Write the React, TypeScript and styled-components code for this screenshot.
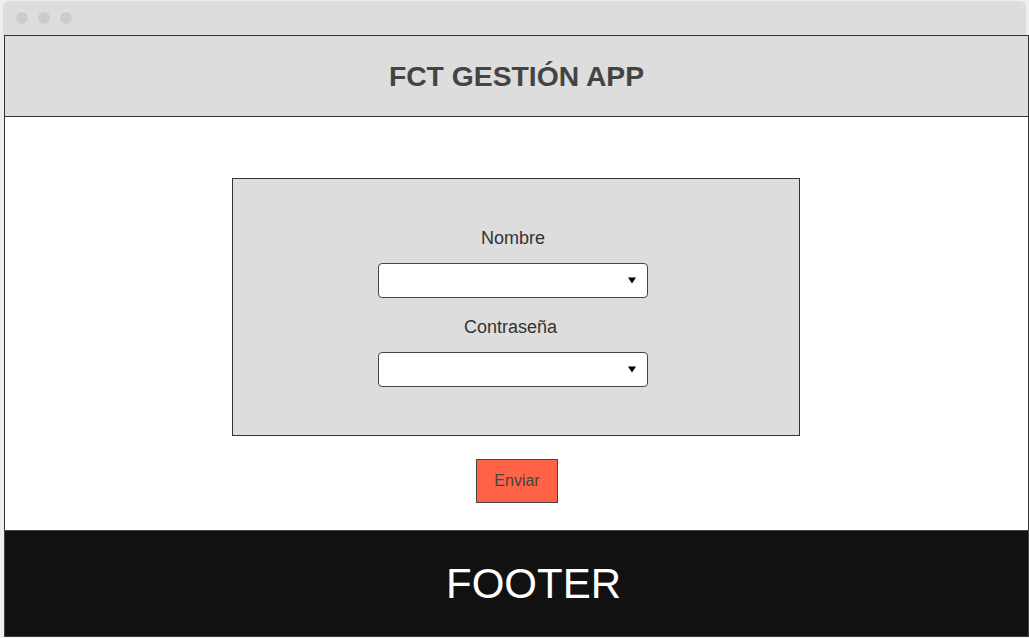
import React from "react";
import styled, { createGlobalStyle } from "styled-components";

const Global = createGlobalStyle`
  html, body { margin: 0; padding: 0; background: #fff; }
  body { font-family: "Liberation Sans", Arial, sans-serif; }
  * { box-sizing: border-box; }
`;

const Window = styled.div`
  width: 1029px;
  height: 638px;
  background: #eeeeee;
  padding-top: 1px;
  display: flex;
  flex-direction: column;
  overflow: hidden;
`;

const Chrome = styled.div`
  margin-left: 3px;
  width: 1023px;
  height: 34px;
  flex: none;
  background: #dddddd;
  border-radius: 6px 6px 0 0;
  display: flex;
  align-items: center;
  gap: 10px;
  padding-left: 13px;
`;

const Dot = styled.span`
  width: 12px;
  height: 12px;
  border-radius: 50%;
  background: #cccccc;
`;

const Viewport = styled.div`
  margin-left: 4px;
  width: 1025px;
  height: 602px;
  display: flex;
  flex-direction: column;
  background: #fff;
`;

const Header = styled.header`
  height: 82px;
  flex: none;
  background: #dddddd;
  border: 1px solid #333;
  display: flex;
  align-items: center;
  justify-content: center;
`;

const Title = styled.h1`
  margin: 0;
  font-size: 28.3px;
  font-weight: bold;
  color: #444;
`;

const Main = styled.main`
  flex: 1;
  border-left: 1px solid #333;
  border-right: 1px solid #333;
  display: flex;
  flex-direction: column;
  align-items: center;
  padding-top: 61px;
`;

const Card = styled.div`
  width: 568px;
  height: 258px;
  margin-right: 1px;
  background: #dddddd;
  border: 1px solid #333;
  display: flex;
  flex-direction: column;
  align-items: center;
  padding-top: 49px;
  padding-right: 6px;
`;

const Label = styled.label<{ $gap?: number; $shift?: number }>`
  display: block;
  font-size: 18px;
  line-height: 20px;
  color: #333;
  margin-top: ${(p) => p.$gap ?? 0}px;
  margin-bottom: 15px;
  margin-right: ${(p) => p.$shift ?? 0}px;
`;

const Select = styled.div`
  width: 270px;
  height: 35px;
  background: #fff;
  border: 1px solid #444;
  border-radius: 4px;
  display: flex;
  align-items: center;
  justify-content: flex-end;
  padding-right: 11px;
`;

const Button = styled.button`
  margin-top: 23px;
  margin-left: 1px;
  width: 82px;
  height: 44px;
  background: #ff6347;
  border: 1px solid #444;
  border-radius: 0;
  font-family: "Liberation Sans", Arial, sans-serif;
  font-size: 16px;
  color: #444;
  padding: 0;
`;

const Footer = styled.footer`
  height: 107px;
  flex: none;
  background: #111;
  border: 1px solid #444;
  display: flex;
  align-items: center;
  justify-content: center;
  padding-left: 34px;
`;

const FooterText = styled.span`
  font-size: 42px;
  color: #fff;
`;

const Arrow = () => (
  <svg width="8" height="7" viewBox="0 0 8 7">
    <path d="M0 0.5 H8 L4 6.5 Z" fill="#000" />
  </svg>
);

export default function App() {
  return (
    <>
      <Global />
      <Window>
        <Chrome>
          <Dot />
          <Dot />
          <Dot />
        </Chrome>
        <Viewport>
          <Header>
            <Title>FCT GESTIÓN APP</Title>
          </Header>
          <Main>
            <Card>
              <Label>Nombre</Label>
              <Select>
                <Arrow />
              </Select>
              <Label $gap={19} $shift={5}>
                Contraseña
              </Label>
              <Select>
                <Arrow />
              </Select>
            </Card>
            <Button>Enviar</Button>
          </Main>
          <Footer>
            <FooterText>FOOTER</FooterText>
          </Footer>
        </Viewport>
      </Window>
    </>
  );
}
